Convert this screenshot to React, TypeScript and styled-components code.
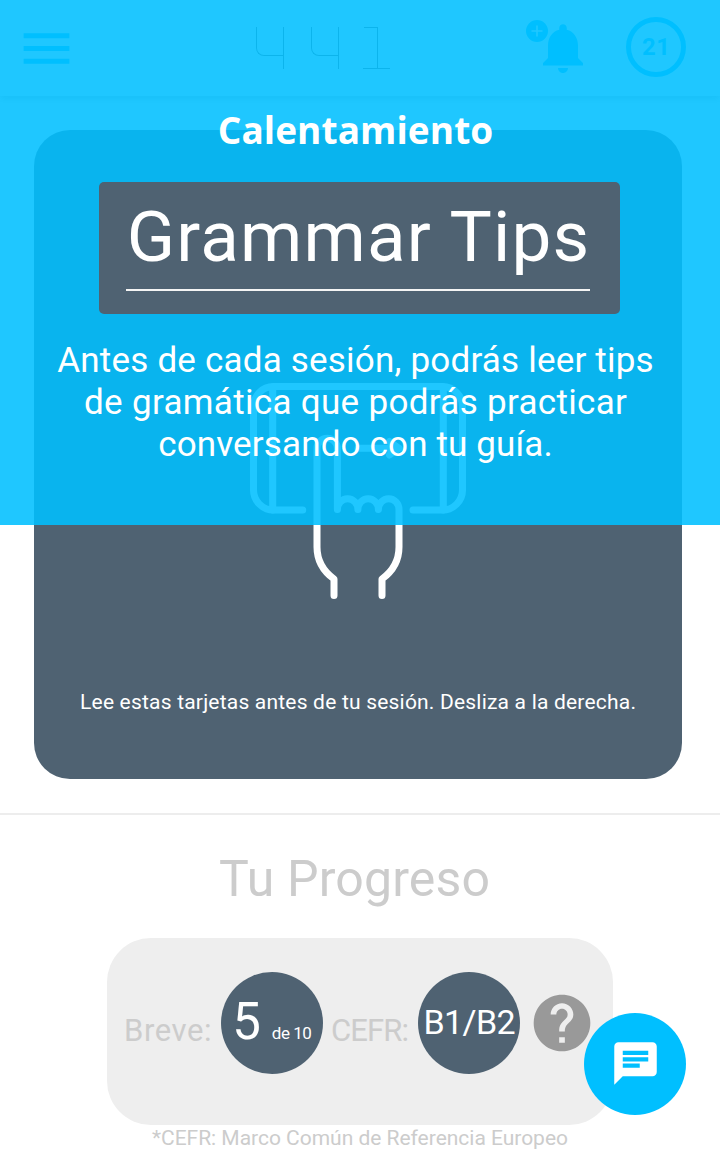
import React from 'react';
import styled, { createGlobalStyle } from 'styled-components';
import { MdChat, MdHelp, MdMenu } from 'react-icons/md';

const sky = '#00bfff';
const slate = '#4f6272';

const GlobalStyle = createGlobalStyle`
  * { box-sizing: border-box; }
  body {
    margin: 0;
    background: #fff;
    font-family: Roboto, 'Liberation Sans', sans-serif;
  }
`;

const Page = styled.div`
  position: relative;
  width: 720px;
  height: 1157px;
  overflow: hidden;
`;

const Text = styled.span<{ $size: number; $line: number; $track?: number }>`
  display: block;
  white-space: pre;
  font-size: ${(p) => p.$size}px;
  line-height: ${(p) => p.$line}px;
  letter-spacing: ${(p) => p.$track ?? 0}px;
  margin-right: ${(p) => -(p.$track ?? 0)}px;
`;

const Header = styled.header`
  display: flex;
  align-items: flex-start;
  height: 96px;
  padding: 17px 34px 0 16px;
  color: ${sky};
  box-shadow: 0 3px 7px rgba(0, 0, 0, 0.24);
`;

const MenuIcon = styled(MdMenu)`
  width: 61px;
  height: 61px;
  margin-top: 0.7px;
`;

const Timer = styled.div`
  display: flex;
  gap: 27px;
  margin: 10px 0 0 179px;
`;

const Four = styled.div`
  display: flex;
  width: 28px;
  height: 42px;
  &::before {
    content: '';
    width: 27px;
    height: 28px;
    border: solid #666;
    border-width: 0 0 1px 1px;
    border-bottom-left-radius: 8px;
  }
  &::after {
    content: '';
    width: 1px;
    background: #666;
  }
`;

const One = styled.div`
  display: flex;
  width: 27px;
  height: 42px;
  margin-left: -3px;
  border-bottom: 1px solid #666;
  &::before {
    content: '';
    width: 13px;
    margin-left: 1px;
    border: solid #666;
    border-width: 1px 1px 0 0;
  }
`;

const Alerts = styled.svg`
  display: block;
  width: 68px;
  height: 60px;
  margin: 1px 0 0 135px;
`;

const Count = styled.div`
  display: flex;
  align-items: center;
  justify-content: center;
  width: 60px;
  height: 60px;
  margin-left: auto;
  border: 5px solid ${sky};
  border-radius: 50%;
  font-weight: 700;
`;

const TipCard = styled.section`
  display: flex;
  flex-direction: column;
  align-items: center;
  width: 648px;
  height: 649px;
  margin: 34px 0 0 34px;
  padding-top: 253px;
  border-radius: 36px;
  background: ${slate};
  color: #fff;
`;

const SwipeIcon = styled.svg`
  display: block;
  width: 216px;
  height: 216px;
  margin-bottom: 89px;
`;

const Divider = styled.div`
  height: 2px;
  margin-top: 34px;
  background: #ededed;
`;

const Progress = styled.section`
  display: flex;
  flex-direction: column;
  align-items: center;
  padding-top: 34px;
  color: #ccc;
`;

const ProgressTitle = styled(Text)`
  padding-right: 11px;
`;

const Panel = styled.div`
  display: flex;
  align-items: flex-start;
  width: 506px;
  height: 187px;
  margin-top: 29px;
  padding: 34px 0 0 17px;
  border-radius: 44px;
  background: #eee;
`;

const Label = styled.div<{ $width: number; $inset: number }>`
  flex: none;
  width: ${(p) => p.$width}px;
  padding: 39px 0 0 ${(p) => p.$inset}px;
`;

const Disc = styled.div<{ $gap: number }>`
  display: flex;
  flex: none;
  align-items: baseline;
  justify-content: center;
  gap: ${(p) => p.$gap}px;
  width: 102px;
  height: 102px;
  border-radius: 50%;
  background: ${slate};
  color: #fff;
`;

const Score = styled(Text)`
  padding-top: 20px;
`;

const Level = styled(Text)`
  padding: 30px 0 0 1px;
`;

const HelpIcon = styled(MdHelp)`
  flex: none;
  width: 68px;
  height: 68px;
  margin: 17px 0 0 8px;
  color: #999;
`;

const Overlay = styled.div`
  position: absolute;
  inset: 0 0 auto;
  height: 525px;
  padding-top: 106px;
  background: rgba(0, 191, 255, 0.88);
  color: #fff;
`;

const OverlayText = styled.div`
  display: flex;
  flex-direction: column;
  align-items: center;
  width: 711px;
`;

const OverlayTitle = styled(Text)`
  font-family: 'Open Sans', 'Noto Sans', sans-serif;
  font-weight: 700;
`;

const Banner = styled.div`
  width: 521px;
  height: 132px;
  margin: 28px 0 26px 99px;
  padding: 15px 30px 0 27px;
  border-radius: 5px;
  background: ${slate};
`;

const BannerTitle = styled.div`
  display: flex;
  justify-content: center;
  height: 94px;
  border-bottom: 2px solid #f4f4f4;
`;

const ChatButton = styled.button`
  position: absolute;
  left: 584px;
  top: 1013px;
  display: flex;
  align-items: center;
  justify-content: center;
  width: 102px;
  height: 102px;
  padding: 0 0 1px;
  border: 0;
  border-radius: 50%;
  background: ${sky};
  color: #fff;
`;

export default function App() {
  return (
    <Page>
      <GlobalStyle />
      <Header>
        <MenuIcon />
        <Timer aria-label="441">
          <Four />
          <Four />
          <One />
        </Timer>
        <Alerts viewBox="0 0 68 60">
          <path
            transform="translate(8 0) scale(2.5)"
            fill={sky}
            d="M12 22c1.1 0 2-.9 2-2h-4c0 1.1.89 2 2 2zm6-6v-5c0-3.07-1.64-5.64-4.5-6.32V4c0-.83-.67-1.5-1.5-1.5s-1.5.67-1.5 1.5v.68C7.63 5.36 6 7.92 6 11v5l-2 2v1h16v-1l-2-2z"
          />
          <circle cx="12" cy="13" r="11" fill={sky} />
          <path d="M12 7.5v11M6.5 13h11" stroke="#fff" strokeWidth="1.6" />
        </Alerts>
        <Count>
          <Text $size={24} $line={30} $track={0.5}>21</Text>
        </Count>
      </Header>

      <TipCard>
        <SwipeIcon viewBox="250 383 216 216" fill="none" stroke="#fff" strokeWidth="7" strokeLinecap="round" strokeLinejoin="round">
          <path d="M302.7 510H273.5a20 20 0 0 1-20-20V406.6a20 20 0 0 1 20-20H442.5a20 20 0 0 1 20 20V490a20 20 0 0 1-20 20H413" />
          <path d="M272.7 387V510M443.3 387V510" />
          <path d="M334 595.5V579C323 571 317 560 317 547V448.5a10.2 10.2 0 0 1 20.4 0V509.5a10.25 10.8 0 0 1 20.5 0a10.25 10.8 0 0 1 20.5 0a10.25 10.8 0 0 1 20.6 0V547C399 560 393 571 382 579V595.5" />
          <path d="M358 448.3H399M389.5 441.5L399 448.3L389.5 455" />
        </SwipeIcon>
        <Text $size={21} $line={29} $track={0.2}>Lee estas tarjetas antes de tu sesión. Desliza a la derecha.</Text>
      </TipCard>

      <Divider />

      <Progress>
        <ProgressTitle $size={50} $line={60} $track={0.15}>Tu Progreso</ProgressTitle>
        <Panel>
          <Label $width={97} $inset={0}>
            <Text $size={31} $line={40} $track={0.6}>Breve:</Text>
          </Label>
          <Disc $gap={11}>
            <Score $size={51} $line={60}>5</Score>
            <Text $size={17} $line={20} $track={-0.5}>de 10</Text>
          </Disc>
          <Label $width={95} $inset={8}>
            <Text $size={31} $line={40} $track={-0.9}>CEFR:</Text>
          </Label>
          <Disc $gap={0}>
            <Level $size={34} $line={40} $track={-0.6}>B1/B2</Level>
          </Disc>
          <HelpIcon />
        </Panel>
        <Text $size={21} $line={26} $track={-0.02}>*CEFR: Marco Común de Referencia Europeo</Text>
      </Progress>

      <Overlay>
        <OverlayText>
          <OverlayTitle $size={37} $line={48} $track={0.08}>Calentamiento</OverlayTitle>
        </OverlayText>
        <Banner>
          <BannerTitle>
            <Text $size={71} $line={80} $track={1.2}>Grammar Tips</Text>
          </BannerTitle>
        </Banner>
        <OverlayText>
          <Text $size={35} $line={42} $track={0.2}>Antes de cada sesión, podrás leer tips</Text>
          <Text $size={35} $line={42} $track={0.32}>de gramática que podrás practicar</Text>
          <Text $size={35} $line={42} $track={0.15}>conversando con tu guía.</Text>
        </OverlayText>
      </Overlay>

      <ChatButton aria-label="Chat">
        <MdChat size={51} />
      </ChatButton>
    </Page>
  );
}
